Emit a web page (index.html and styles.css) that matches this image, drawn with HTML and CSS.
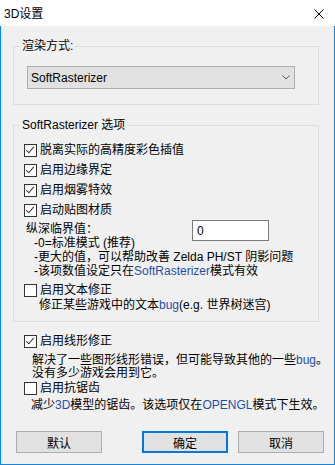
FILE: index.html
```html
<!DOCTYPE html>
<html lang="zh-CN">
<head>
  <meta charset="UTF-8">
  <title>3D设置</title>
  <link rel="stylesheet" href="styles.css">
</head>
<body>
  <div class="window">
    <div class="titlebar">
      <span class="title">3D设置</span>
      <svg class="close" width="10" height="10" viewBox="0 0 10 10">
        <path d="M0.5 0.5 L9.5 9.5 M9.5 0.5 L0.5 9.5" stroke="#000" stroke-width="1" fill="none"/>
      </svg>
    </div>

    <div class="client">
      <fieldset class="group group-render">
        <legend>渲染方式:</legend>
        <div class="combo">
          <span>SoftRasterizer</span>
          <svg class="chevron" width="8" height="5" viewBox="0 0 8 5">
            <polyline points="0.5,0.5 4,4 7.5,0.5" stroke="#555" stroke-width="1" fill="none"/>
          </svg>
        </div>
      </fieldset>

      <fieldset class="group group-options">
        <legend>SoftRasterizer 选项</legend>
        <div class="check-list">
          <label class="check"><span class="box checked"></span>脱离实际的高精度彩色插值</label>
          <label class="check"><span class="box checked"></span>启用边缘界定</label>
          <label class="check"><span class="box checked"></span>启用烟雾特效</label>
          <label class="check"><span class="box checked"></span>启动贴图材质</label>
        </div>
        <div class="depth">
          <span class="depth-label">纵深临界值：</span>
          <input class="depth-input" type="text" value="0">
        </div>
        <div class="notes">
          <div>-0=标准模式 (推荐)</div>
          <div>-更大的值，可以帮助改善 Zelda PH/ST 阴影问题</div>
          <div>-该项数值设定只在<span class="hl">SoftRasterizer</span>模式有效</div>
        </div>
        <label class="check check-text"><span class="box"></span>启用文本修正</label>
        <div class="hint hint-text">修正某些游戏中的文本<span class="hl">bug</span>(e.g. 世界树迷宫)</div>
      </fieldset>

      <div class="extra">
        <label class="check check-line"><span class="box checked"></span>启用线形修正</label>
        <div class="hint hint-line">
          <div>解决了一些图形线形错误，但可能导致其他的一些<span class="hl">bug</span>。</div>
          <div>没有多少游戏会用到它。</div>
        </div>
        <label class="check check-aa"><span class="box"></span>启用抗锯齿</label>
        <div class="hint hint-aa">减少<span class="hl">3D</span>模型的锯齿。该选项仅在<span class="hl">OPENGL</span>模式下生效。</div>
      </div>

      <div class="buttons">
        <button class="btn btn-reset">默认</button>
        <button class="btn btn-ok">确定</button>
        <button class="btn">取消</button>
      </div>
    </div>
  </div>
</body>
</html>
```

FILE: styles.css
```css
body {
  margin: 0;
  background: #f0f0f0;
  font-family: "Liberation Sans", "Noto Sans CJK SC", sans-serif;
  font-size: 12px;
  color: #000;
}

.window {
  width: 335px;
  height: 465px;
  display: flex;
  flex-direction: column;
}

.titlebar {
  height: 26px;
  background: #fff;
  display: flex;
  align-items: center;
  justify-content: space-between;
  padding: 0 11px 0 4px;
  box-sizing: border-box;
}

.title {
  line-height: 14px;
  margin-top: 1px;
}

.close {
  display: block;
  margin-top: 2px;
}

.client {
  flex: 1;
  display: flex;
  flex-direction: column;
  border: 1px solid #1883d7;
  border-top: none;
  background: #f0f0f0;
  padding-top: 13px;
}

.group {
  margin: 0 0 0 12px;
  padding: 0;
  width: 306px;
  box-sizing: border-box;
  border: 1px solid #dcdcdc;
}

.group legend {
  margin-left: 6px;
  padding: 0 2px;
  line-height: 14px;
}

.group-render {
  padding-bottom: 15px;
}

.group-options {
  margin-top: 13px;
  padding-bottom: 9px;
}

.combo {
  margin: 13px 0 0 13px;
  width: 268px;
  height: 23px;
  box-sizing: border-box;
  border: 1px solid #adadad;
  background: #e1e1e1;
  display: flex;
  align-items: center;
  justify-content: space-between;
  padding: 0 4px 0 3px;
}

.chevron {
  display: block;
}

.check-list {
  padding: 10px 0 0 10px;
  display: flex;
  flex-direction: column;
  gap: 4px;
}

.check {
  height: 16px;
  display: flex;
  align-items: center;
  gap: 3px;
  line-height: 16px;
}

.box {
  width: 13px;
  height: 13px;
  box-sizing: border-box;
  border: 1px solid #333;
  background: #fff;
  flex-shrink: 0;
  position: relative;
}

.box.checked::after {
  content: "";
  position: absolute;
  left: 3px;
  top: 0px;
  width: 3px;
  height: 7px;
  border: solid #333;
  border-width: 0 1px 1px 0;
  transform: rotate(40deg);
}

.depth {
  margin-top: 2px;
  padding-left: 12px;
  height: 18px;
  display: flex;
  align-items: flex-start;
}

.depth-label {
  width: 166px;
  line-height: 18px;
}

.depth-input {
  width: 77px;
  height: 21px;
  box-sizing: border-box;
  border: 1px solid #7a7a7a;
  background: #fff;
  padding: 0 0 0 4px;
  margin: 0;
  font: inherit;
  color: #000;
}

.notes {
  margin-top: -2px;
  padding-left: 20px;
  line-height: 14px;
}

.check-text {
  margin: 4px 0 0 10px;
}

.hint-text {
  padding-left: 25px;
  line-height: 14px;
}

.hl {
  color: #1f4ea8;
}

.extra {
  display: flex;
  flex-direction: column;
}

.check-line {
  margin: 11px 0 0 23px;
}

.hint-line {
  margin-top: 5px;
  padding-left: 31px;
  line-height: 13px;
}

.check-aa {
  margin: 0 0 0 23px;
}

.hint-aa {
  margin-top: 2px;
  padding-left: 30px;
  line-height: 14px;
}

.buttons {
  margin-top: auto;
  margin-bottom: 11px;
  padding: 0 9px 0 15px;
  display: flex;
  gap: 10px;
}

.btn {
  width: 86px;
  height: 22px;
  box-sizing: border-box;
  border: 1px solid #adadad;
  background: #e1e1e1;
  font: inherit;
  color: #000;
  padding: 0;
}

.btn-reset {
  margin-right: 30px;
}

.btn-ok {
  border: 2px solid #0078d7;
}
```
